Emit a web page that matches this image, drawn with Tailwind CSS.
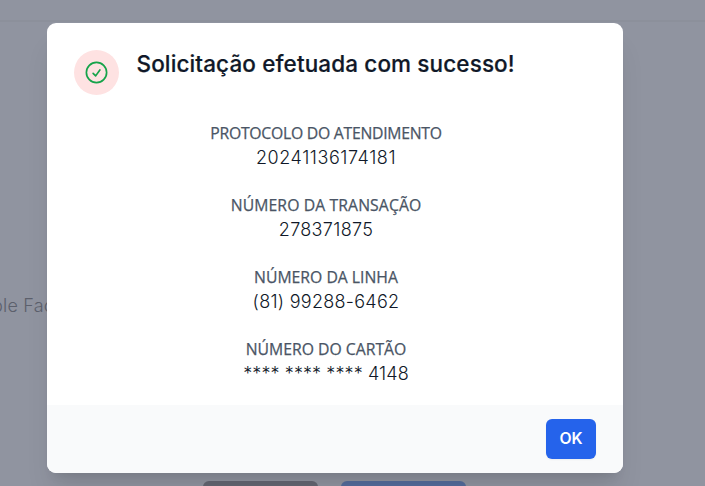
<!DOCTYPE html>
<html lang="pt-BR">
<head>
  <meta charset="UTF-8" />
  <meta name="viewport" content="width=device-width, initial-scale=1.0" />
  <title>Solicitação efetuada</title>
  <script src="https://cdn.jsdelivr.net/npm/@tailwindcss/browser@4"></script>
</head>
<body class="relative h-[486px] overflow-hidden bg-[#9094a0] font-[Inter,sans-serif]">
  <!-- Page behind the modal -->
  <div class="flex h-full flex-col">
    <header class="h-[22px] shrink-0 border-b-2 border-[#8c909b]"></header>
    <main class="flex flex-1 flex-col justify-between pt-[270px]">
      <p class="-ml-[8px] text-[18px] leading-7 font-light tracking-[0.2px] whitespace-nowrap text-[#5c606c]">ble Fac</p>
      <div class="flex h-[5px] gap-[23px] overflow-hidden pl-[203px]">
        <div class="h-10 w-[115px] rounded-md bg-[#646672]"></div>
        <div class="h-10 w-[125px] rounded-md bg-[#546c9c]"></div>
      </div>
    </main>
  </div>

  <!-- Modal -->
  <div class="absolute top-[23px] left-[47px] flex h-[450px] w-[576px] flex-col overflow-hidden rounded-[9px] bg-white shadow-[0_22px_28px_-6px_rgb(0_0_0/0.1),0_9px_11px_-7px_rgb(0_0_0/0.1)]" role="dialog">
    <div class="flex-1 px-[27px] pt-[27px]">
      <div class="flex items-start gap-[17.5px]">
        <div class="flex size-[45px] items-center justify-center rounded-full bg-[#fee2e2]">
          <svg class="size-[27px] text-[#16a34a]" fill="none" viewBox="0 0 24 24" stroke-width="1.5" stroke="currentColor">
            <path stroke-linecap="round" stroke-linejoin="round" d="M9 12.75 11.25 15 15 9.75M21 12a9 9 0 1 1-18 0 9 9 0 0 1 18 0Z" />
          </svg>
        </div>
        <h3 class="text-[22.5px] leading-[27px] font-medium tracking-[0.12px] whitespace-nowrap text-gray-900 [-webkit-text-stroke:0.2px]">Solicitação efetuada com sucesso!</h3>
      </div>

      <dl class="mt-[26px] flex flex-col gap-[22px] pr-[18px] text-center">
        <div>
          <dt class="font-['Open_Sans',sans-serif] text-[15.75px] leading-6 font-medium tracking-[-0.26px] text-gray-600 [-webkit-text-stroke:0.25px]">PROTOCOLO DO ATENDIMENTO</dt>
          <dd class="text-[18px] leading-[26px] font-light tracking-[0.57px] text-gray-900">20241136174181</dd>
        </div>
        <div>
          <dt class="font-['Open_Sans',sans-serif] text-[15.75px] leading-6 font-medium tracking-[0.1px] text-gray-600 [-webkit-text-stroke:0.25px]">NÚMERO DA TRANSAÇÃO</dt>
          <dd class="text-[18px] leading-[26px] font-light tracking-[0.33px] text-gray-900">278371875</dd>
        </div>
        <div>
          <dt class="font-['Open_Sans',sans-serif] text-[15.75px] leading-6 font-medium text-gray-600 [-webkit-text-stroke:0.25px]">NÚMERO DA LINHA</dt>
          <dd class="text-[18px] leading-[26px] font-light tracking-[0.28px] text-gray-900">(81) 99288-6462</dd>
        </div>
        <div>
          <dt class="font-['Open_Sans',sans-serif] text-[15.75px] leading-6 font-medium text-gray-600 [-webkit-text-stroke:0.25px]">NÚMERO DO CARTÃO</dt>
          <dd class="text-[18px] leading-[26px] font-light tracking-[0.1px] text-gray-900">**** **** **** 4148</dd>
        </div>
      </dl>
    </div>

    <div class="flex h-[68px] items-center justify-end bg-[#f9fafb] px-[27px]">
      <button class="h-10 w-[50px] rounded-[6px] bg-[#2563eb] text-[15.75px] font-semibold text-white shadow-xs">OK</button>
    </div>
  </div>
</body>
</html>
